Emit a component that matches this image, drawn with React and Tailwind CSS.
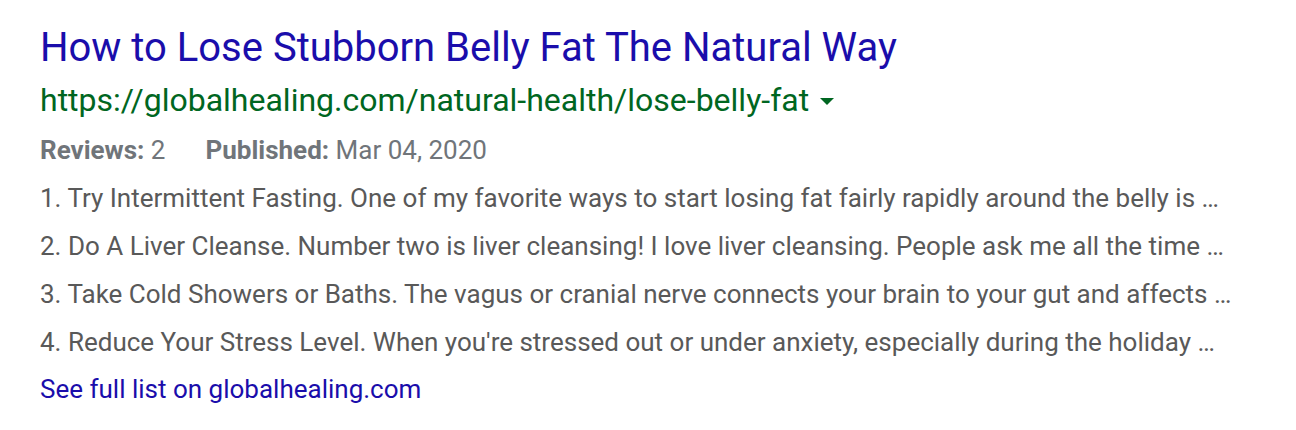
export default function App() {
  const items = [
    '1. Try Intermittent Fasting. One of my favorite ways to start losing fat fairly rapidly around the belly is …',
    '2. Do A Liver Cleanse. Number two is liver cleansing! I love liver cleansing. People ask me all the time …',
    '3. Take Cold Showers or Baths. The vagus or cranial nerve connects your brain to your gut and affects …',
    "4. Reduce Your Stress Level. When you're stressed out or under anxiety, especially during the holiday …",
  ]

  return (
    <div className="bg-white w-[1296px] h-[430px] pl-[40px] pt-[24px] font-['Roboto',sans-serif]">
      <a href="#" className="block text-[40px] leading-[48px] text-[#1a0dab]">
        How to Lose Stubborn Belly Fat The Natural Way
      </a>
      <div className="flex items-center text-[32px] leading-[40px] text-[#006621] mt-[8px]">
        <span>https://globalhealing.com/natural-health/lose-belly-fat</span>
        <svg width="14" height="8" viewBox="0 0 14 8" className="ml-[11px] mt-[4px]">
          <path d="M0 0h14L7 7z" fill="#006621" />
        </svg>
      </div>
      <div className="mt-[6px] text-[26px] leading-[48px] text-[#70757a]">
        <span className="font-bold">Reviews:</span> 2
        <span className="ml-[40px] font-bold">Published:</span> Mar 04, 2020
      </div>
      <ul className="text-[26px] leading-[48px] text-[#595959]">
        {items.map((t) => (
          <li key={t} className="whitespace-nowrap">{t}</li>
        ))}
      </ul>
      <a href="#" className="block text-[26px] leading-[46px] text-[#1a0dab]">
        See full list on globalhealing.com
      </a>
    </div>
  )
}
